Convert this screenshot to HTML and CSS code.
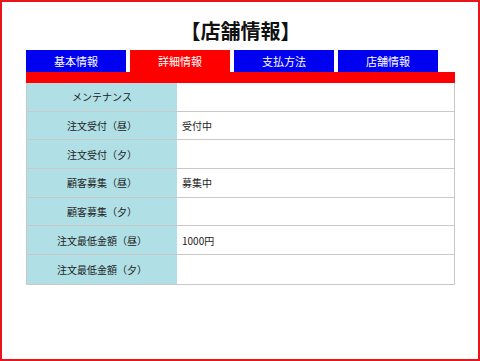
FILE: index.html
```html
<!DOCTYPE html>
<html lang="ja">
<head>
    <meta charset="UTF-8">
    <title>店舗情報</title>
    <link rel="stylesheet" href="styles.css">
</head>
<body>
    <div class="frame">
        <h1 class="title">【店舗情報】</h1>
        <nav class="tabs">
            <a class="tab">基本情報</a>
            <a class="tab active">詳細情報</a>
            <a class="tab">支払方法</a>
            <a class="tab">店舗情報</a>
        </nav>
        <div class="bar"></div>
        <div class="info">
            <div class="label">メンテナンス</div><div class="value"></div>
            <div class="label">注文受付（昼）</div><div class="value">受付中</div>
            <div class="label">注文受付（夕）</div><div class="value"></div>
            <div class="label">顧客募集（昼）</div><div class="value">募集中</div>
            <div class="label">顧客募集（夕）</div><div class="value"></div>
            <div class="label">注文最低金額（昼）</div><div class="value">1000円</div>
            <div class="label">注文最低金額（夕）</div><div class="value"></div>
        </div>
    </div>
</body>
</html>
```
FILE: styles.css
```css
body {
    margin: 0;
    font-family: "Noto Sans CJK JP", "Noto Sans", sans-serif;
    background: #fff;
}
.frame {
    box-sizing: border-box;
    width: 480px;
    height: 361px;
    border: 2px solid #e8161b;
    padding: 0 23px 0 24px;
}
.title {
    margin: 14px 0 0;
    height: 34px;
    line-height: 30px;
    font-size: 20px;
    font-weight: bold;
    text-align: center;
    color: #111;
}
.tabs {
    display: flex;
    gap: 4px;
}
.tab {
    width: 100px;
    height: 22px;
    line-height: 22px;
    background: #0000f0;
    color: #fff;
    font-size: 11px;
    text-align: center;
}
.tab.active {
    background: #ff0000;
}
.bar {
    width: 429px;
    height: 11px;
    background: #ff0000;
}
.info {
    width: 429px;
    display: grid;
    grid-template-columns: 150px 1fr;
    grid-auto-rows: 28.7px;
    box-sizing: border-box;
    border: 1px solid #c8c8c8;
    border-top: none;
    font-size: 10px;
    color: #222;
}
.label, .value {
    display: flex;
    align-items: center;
    border-bottom: 1px solid #c8c8c8;
}
.info > :nth-last-child(-n+2) {
    border-bottom: none;
}
.label {
    justify-content: center;
    background: #b0e0e6;
}
.value {
    padding-left: 5px;
}
```
